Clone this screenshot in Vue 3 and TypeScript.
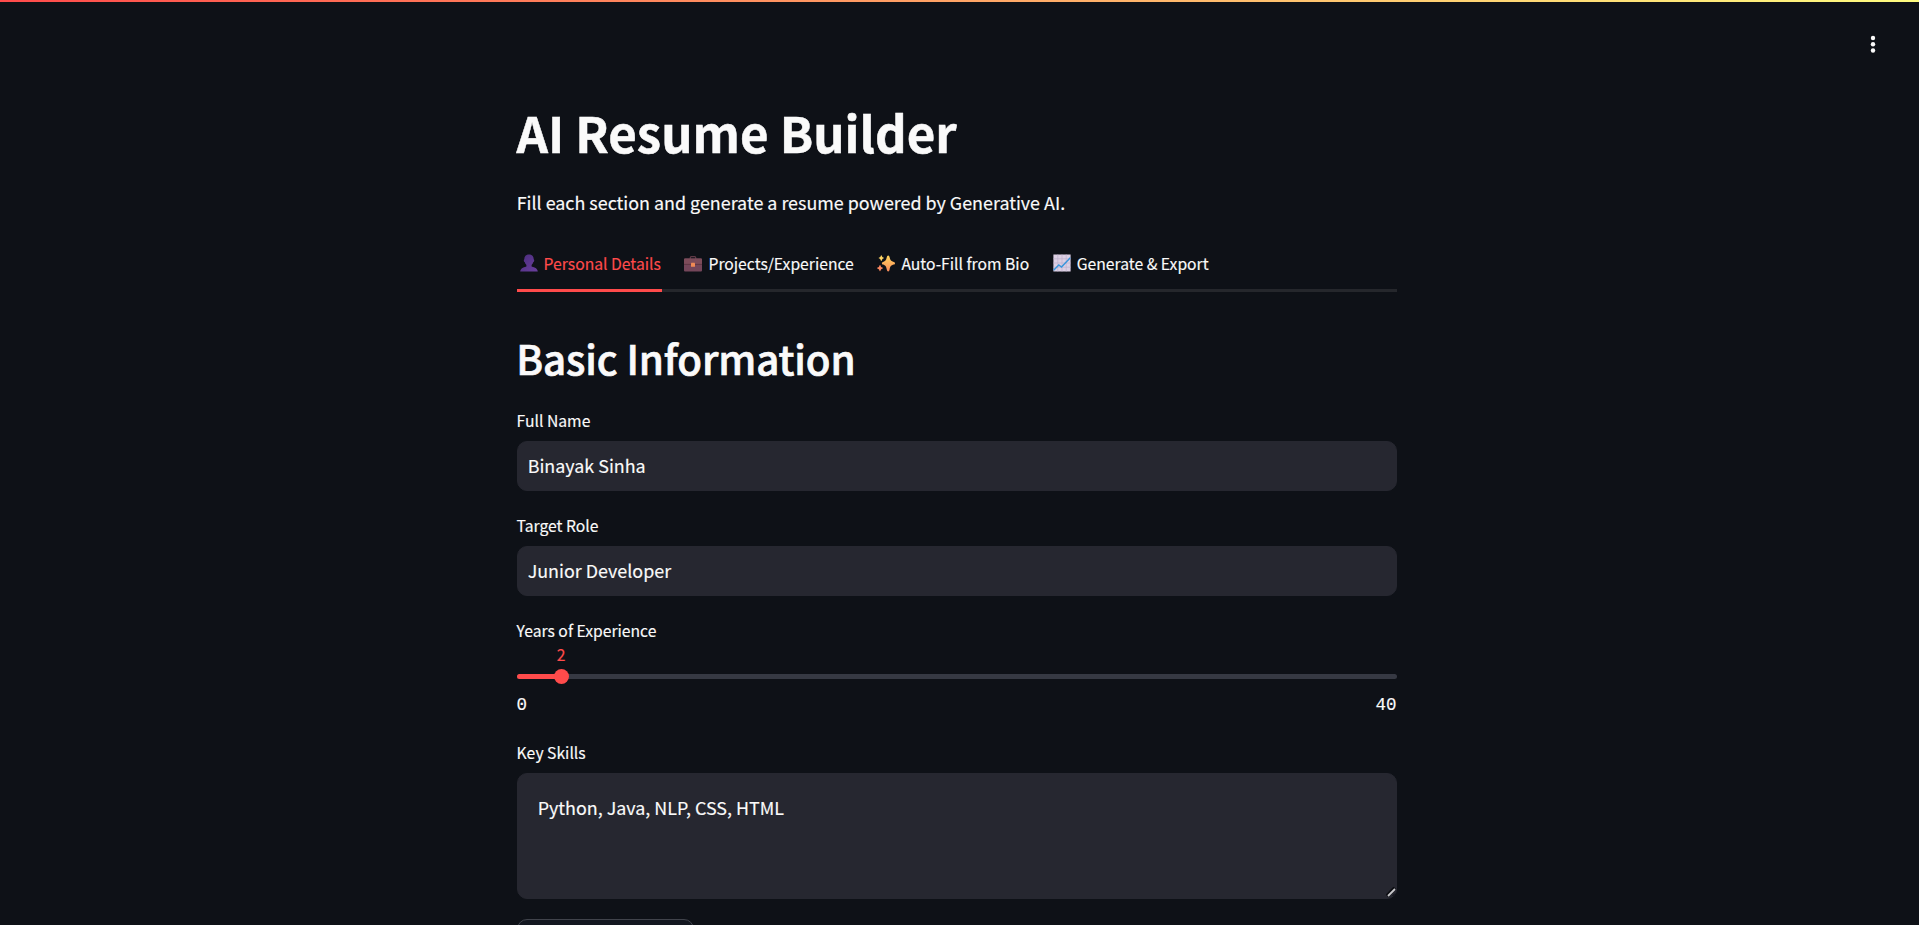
<script setup lang="ts">
import { computed, ref } from 'vue'

type TabId = 'personal' | 'projects' | 'autofill' | 'export'

const tabs: { id: TabId; label: string }[] = [
  { id: 'personal', label: 'Personal Details' },
  { id: 'projects', label: 'Projects/Experience' },
  { id: 'autofill', label: 'Auto-Fill from Bio' },
  { id: 'export', label: 'Generate & Export' },
]
const activeTab = ref<TabId>('personal')

const fullName = ref('Binayak Sinha')
const targetRole = ref('Junior Developer')
const skills = ref('Python, Java, NLP, CSS, HTML')

const years = ref(2)
const minYears = 0
const maxYears = 40
const percent = computed(() => ((years.value - minYears) / (maxYears - minYears)) * 100 + '%')
</script>

<template>
  <div class="page">
    <div class="decoration"></div>
    <button class="menu" aria-label="Main menu">
      <svg width="8" height="20" viewBox="0 0 8 20">
        <circle cx="4" cy="4" r="2.2" />
        <circle cx="4" cy="10.2" r="2.2" />
        <circle cx="4" cy="16.5" r="2.2" />
      </svg>
    </button>

    <main class="column">
      <h1 class="title">AI Resume Builder</h1>
      <p class="intro">Fill each section and generate a resume powered by Generative AI.</p>

      <nav class="tabs">
        <button
          v-for="tab in tabs"
          :key="tab.id"
          class="tab"
          :class="{ active: tab.id === activeTab }"
          @click="activeTab = tab.id"
        >
          <svg v-if="tab.id === 'personal'" class="icon" viewBox="0 0 18 18">
            <defs>
              <linearGradient id="bust" x1="0" y1="0" x2="1" y2="1">
                <stop offset="0" stop-color="#4a2d7c" />
                <stop offset="1" stop-color="#6a3f9e" />
              </linearGradient>
            </defs>
            <path fill="url(#bust)" d="M9 .4c3 0 4.7 1.8 4.7 4.5 0 .5.5.7.5 1.5s-.5 1.300-.9 1.700c-.4 1.400-1 2.200-1.700 2.800v1.500c1.200.7 5.900 1 6.200 5.100H.2c.3-4.100 5-4.400 6.200-5.100v-1.500C5.700 10.300 5.100 9.500 4.700 8.100c-.4-.4-.9-.9-.9-1.700s.5-1 .5-1.500C4.300 2.200 6 .4 9 .4z" />
          </svg>
          <svg v-else-if="tab.id === 'projects'" class="icon" viewBox="0 0 18 18">
            <path fill="none" stroke="#5f3a47" stroke-width="1.300" d="M6.300 5V3.700a1 1 0 0 1 1-1h3.400a1 1 0 0 1 1 1V5" />
            <rect x="0" y="4.500" width="18" height="13" rx="1" fill="#74465a" />
            <path fill="#7d4c5a" d="M0 10V5.500a1 1 0 0 1 1-1h16a1 1 0 0 1 1 1V10z" />
            <path stroke="#5c3542" stroke-width=".9" d="M0 10.400h18" />
            <rect x="7" y="8.800" width="4" height="4" rx=".4" fill="#f08a55" />
          </svg>
          <svg v-else-if="tab.id === 'autofill'" class="icon" viewBox="0 0 18 18">
            <defs>
              <linearGradient id="spark" x1="0" y1="0" x2="0" y2="1">
                <stop offset="0" stop-color="#ffd45c" />
                <stop offset="1" stop-color="#f98a5b" />
              </linearGradient>
            </defs>
            <path fill="url(#spark)" d="M11.200 1.500c.8 0 1.100.700 1.400 1.800.7 3 1.500 3.900 4.200 4.600.8.200 1.200.6 1.200 1.400s-.4 1.100-1.200 1.300c-2.700.8-3.500 1.600-4.200 4.900-.3 1.200-.6 2-1.400 2s-1.100-.8-1.400-2c-.7-3.300-1.500-4.100-3.700-4.900-.8-.2-1.200-.5-1.200-1.300s.4-1.200 1.200-1.400c2.200-.7 3-1.600 3.700-4.600.3-1.100.6-1.800 1.400-1.800z" />
            <path fill="#ffd565" d="M4.300 1.300c.5 0 .7 1.300 1 1.700.4.400 1.700.6 1.700 1.100s-1.300.7-1.700 1.100c-.3.4-.5 1.700-1 1.700s-.7-1.300-1-1.700c-.4-.4-1.700-.6-1.700-1.100s1.300-.7 1.700-1.100c.3-.4.500-1.700 1-1.700z" />
            <path fill="#fa8860" d="M3 11c.5 0 .8 1.500 1.200 1.900s1.800.7 1.800 1.200-1.400.8-1.800 1.200-.7 1.900-1.200 1.900-.8-1.500-1.200-1.900-1.800-.7-1.800-1.200 1.400-.8 1.800-1.200.7-1.900 1.200-1.900z" />
          </svg>
          <svg v-else class="icon" viewBox="0 0 18 18">
            <rect x=".4" y=".5" width="17.200" height="17" fill="#dcd0e4" />
            <path stroke="#bfb1ce" stroke-width=".7" d="M4.800.5v17M9 .5v17M13.200.5v17M.4 4.800h17.200M.4 9h17.200M.4 13.200h17.200" />
            <path fill="none" stroke="#3a96dc" stroke-width="1.500" d="M.6 16.200 5.800 11l2.700 2 8.800-9.300" />
          </svg>
          <span>{{ tab.label }}</span>
        </button>
      </nav>

      <h2 class="heading">Basic Information</h2>

      <label class="field">
        <span class="label">Full Name</span>
        <input v-model="fullName" class="input" type="text" />
      </label>

      <label class="field">
        <span class="label">Target Role</span>
        <input v-model="targetRole" class="input" type="text" />
      </label>

      <div class="field">
        <span class="label">Years of Experience</span>
        <div class="slider">
          <div class="track">
            <div class="fill" :style="{ width: percent }"></div>
          </div>
          <div class="thumb" :style="{ left: percent }">
            <span class="value">{{ years }}</span>
          </div>
        </div>
        <div class="range">
          <span>{{ minYears }}</span>
          <span>{{ maxYears }}</span>
        </div>
      </div>

      <label class="field skills">
        <span class="label">Key Skills</span>
        <span class="area">
          <textarea v-model="skills" class="textarea"></textarea>
          <svg class="grip" width="10" height="10" viewBox="0 0 10 10">
            <path stroke="#0c0d12" stroke-width="4" d="M1 9 9 1" />
            <path stroke="#c9c9cc" stroke-width="1.800" d="M2 9 9 2" />
            <path stroke="#0c0d12" stroke-width="1" d="M6.500 9 9 6.500" />
          </svg>
        </span>
      </label>

      <button class="action" aria-label="Save"></button>
    </main>
  </div>
</template>

<style>
html,
body {
  background: #0e1117;
  overflow: hidden;
}
</style>

<style scoped>
.page {
  position: relative;
  box-sizing: border-box;
  height: 925px;
  padding: 98px 5px 0 0;
  overflow: hidden;
  background: #0e1117;
  color: #fafafa;
  font-family: "Noto Sans CJK SC", "Open Sans", sans-serif;
  font-size: 17.9px;
  -webkit-text-stroke-width: 0.15px;
}

button {
  border: 0;
  padding: 0;
  background: none;
  color: inherit;
  font: inherit;
}

.decoration {
  position: absolute;
  top: 0;
  left: 0;
  right: 0;
  height: 2px;
  background: linear-gradient(90deg, #ff4b4b, #fffd80);
}

.menu {
  position: absolute;
  top: 34.3px;
  right: 42.5px;
  height: 20px;
  width: 8px;
  fill: #fafafa;
}

.menu svg {
  display: block;
}

.column {
  width: 880px;
  margin: 0 auto;
}

.title {
  margin: 0;
  font-size: 49.2px;
  font-weight: 700;
  line-height: 67px;
  text-indent: -0.6px;
  -webkit-text-stroke-width: 0.5px;
}

.intro {
  margin: 22px 0 0;
  line-height: 30px;
  text-indent: -0.3px;
}

.tabs {
  display: flex;
  gap: 20px;
  height: 37px;
  margin-top: 35px;
  border-bottom: 3px solid #25272c;
}

.tab {
  display: flex;
  align-items: flex-start;
  height: 40px;
  box-sizing: border-box;
  border-bottom: 3px solid transparent;
  font-size: 15.7px;
  line-height: 23px;
  white-space: nowrap;
}

.tab.active {
  color: #ff4b4b;
  border-bottom-color: #ff4b4b;
}

.tab span {
  margin: 0 1px 0 -0.7px;
}

.icon {
  flex: none;
  width: 18px;
  height: 18px;
  margin: 2px 6.8px 0 2.5px;
}

.heading {
  margin: 38px 0 24px;
  font-size: 40.3px;
  font-weight: 500;
  line-height: 55px;
  letter-spacing: -0.12px;
  text-indent: -0.7px;
  -webkit-text-stroke-width: 0.7px;
}

.field {
  display: block;
  margin-bottom: 23px;
}

.label {
  display: block;
  font-size: 15.7px;
  line-height: 23px;
  text-indent: -0.4px;
}

.input,
.textarea {
  display: block;
  box-sizing: border-box;
  width: 100%;
  border: 1px solid #262730;
  border-radius: 10px;
  outline: none;
  background: #262730;
  color: #fafafa;
  font: inherit;
}

.input {
  height: 50px;
  margin-top: 9px;
  padding: 0 9.7px 2px;
}

.slider {
  position: relative;
  height: 37px;
  padding-top: 32px;
  box-sizing: border-box;
}

.track {
  height: 5px;
  border-radius: 3px;
  overflow: hidden;
  background: #363943;
}

.fill {
  height: 100%;
  background: #ff4b4b;
}

.thumb {
  position: absolute;
  top: 26.7px;
  width: 15px;
  height: 15px;
  margin-left: -7.5px;
  border-radius: 50%;
  background: #ff4b4b;
}

.value {
  position: absolute;
  bottom: 17.7px;
  left: 50%;
  transform: translateX(-50%);
  color: #ff4b4b;
  font-size: 15.7px;
  line-height: 23px;
}

.range {
  display: flex;
  justify-content: space-between;
  margin: 14px 0.6px 0 -0.6px;
  font-family: "Liberation Mono", monospace;
  font-size: 17.5px;
  line-height: 24px;
}

.skills {
  margin: 24px 0 20px;
}

.area {
  position: relative;
  display: block;
  margin-top: 9px;
}

.textarea {
  height: 126px;
  padding: 20px 19.7px;
  line-height: 26px;
  resize: none;
}

.grip {
  position: absolute;
  right: 1.5px;
  bottom: 2px;
}

.action {
  display: block;
  box-sizing: border-box;
  width: 177px;
  height: 50px;
  border: 1px solid #40434b;
  border-radius: 10px;
  background: #131720;
}
</style>
